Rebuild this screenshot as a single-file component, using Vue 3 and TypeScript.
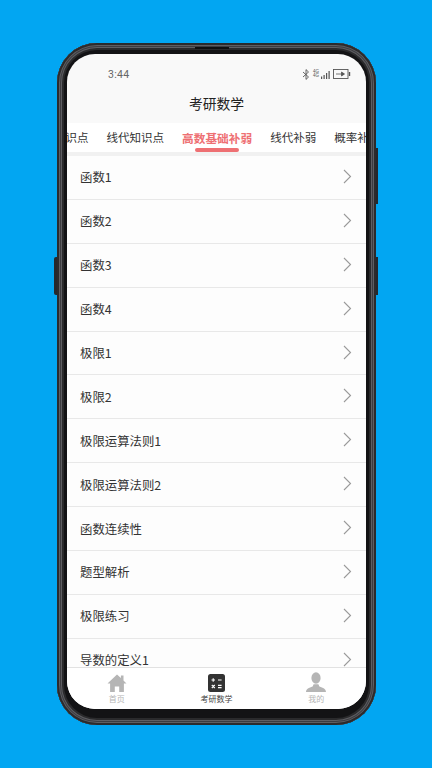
<script setup lang="ts">
const tabs: string[] = ['高数知识点', '线代知识点', '高数基础补弱', '线代补弱', '概率补弱']
const rows: string[] = ['函数1', '函数2', '函数3', '函数4', '极限1', '极限2', '极限运算法则1', '极限运算法则2', '函数连续性', '题型解析', '极限练习', '导数的定义1']
</script>

<template>
  <div class="page">
    <div class="phone">
      <span class="btn btn-left"></span>
      <span class="btn btn-right-a"></span>
      <span class="btn btn-right-b"></span>
      <span class="speaker"></span>
      <div class="screen">
        <div class="status">
          <span class="time">3:44</span>
          <div class="status-icons">
            <svg width="8" height="11" viewBox="0 0 8 11" fill="none" stroke="#555" stroke-width="0.9"><path d="M1 3l5.500 5L4 10.400V.6L6.500 3 1 8" /></svg>
            <span class="net">4G<br />4G</span>
            <svg width="12" height="9" viewBox="0 0 12 9" fill="#555"><rect x="1" y="6.500" width="1.200" height="2.500" /><rect x="3.500" y="5" width="1.200" height="4" /><rect x="6" y="3" width="1.200" height="6" /><rect x="8.500" y="1" width="1.200" height="8" /></svg>
            <svg width="18" height="10" viewBox="0 0 18 10" fill="none"><rect x="0.500" y="0.500" width="14.500" height="9" stroke="#555" stroke-width="0.900" /><rect x="15.800" y="3" width="1.400" height="4" fill="#555" /><path d="M3 5h8M8.500 3l3 2-3 2z" stroke="#555" stroke-width="0.800" fill="#555" /></svg>
          </div>
        </div>
        <div class="title">考研数学</div>
        <div class="tabs">
          <div v-for="(t, i) in tabs" :key="t" class="tab" :class="{ active: i === 2 }">{{ t }}</div>
        </div>
        <div class="list">
          <div v-for="r in rows" :key="r" class="row">
            <span>{{ r }}</span>
            <svg class="chev" width="9" height="15" viewBox="0 0 9 15" fill="none" stroke="#9a9a9a" stroke-width="1.100"><path d="M1 1l6.500 6.500L1 14" /></svg>
          </div>
        </div>
        <div class="nav">
          <div class="nav-item">
            <svg width="20" height="18" viewBox="0 0 20 18" fill="#b5b5b5"><path d="M10 0.500L0.500 9.500h2.600V18h4.700v-5.500h4.400V18h4.700V9.500h2.600L16.500 6.500V1.500h-2.600v2.500z" /></svg>
            <span>首页</span>
          </div>
          <div class="nav-item on">
            <svg width="17" height="18" viewBox="0 0 17 18"><rect width="17" height="18" rx="2.500" fill="#333" /><path d="M3.500 6h3.500M5.200 4.200v3.600M10 6h3.600M3.800 11l3 3M6.800 11l-3 3M10 11.400h3.600M10 13.600h3.600" stroke="#fff" stroke-width="1.100" /></svg>
            <span>考研数学</span>
          </div>
          <div class="nav-item">
            <svg width="20" height="20" viewBox="0 0 20 20" fill="#b5b5b5"><ellipse cx="10" cy="6" rx="4.600" ry="5.800" /><path d="M0 20c0-3.400 3-4.300 6.600-5.600l1-2.200h4.800l1 2.200C17 15.700 20 16.600 20 20z" /></svg>
            <span>我的</span>
          </div>
        </div>
      </div>
    </div>
  </div>
</template>

<style>
html, body { margin: 0; background: #02a6f2; }
</style>

<style scoped>
.page {
  width: 432px;
  height: 768px;
  box-sizing: border-box;
  background: #02a6f2;
  padding: 43px 0 0 57px;
  font-family: "Noto Sans CJK SC", "Liberation Sans", sans-serif;
  overflow: hidden;
}
.phone {
  position: relative;
  width: 319px;
  height: 682px;
  box-sizing: border-box;
  padding: 11px 10px 16px;
  background: #131315;
  border-radius: 40px;
  box-shadow: inset 0 0 0 2px #2b2b2d, inset 0 0 0 3px #5e5e62, inset 0 0 0 4px #3c3c40, inset 0 0 0 5px #5e5e62, inset 0 0 0 7px #2a2a2c;
}
.btn { position: absolute; background: #26282c; }
.btn-left { left: -3px; top: 214px; width: 3px; height: 38px; border-radius: 2px 0 0 2px; }
.btn-right-a { right: -2px; top: 105px; width: 2px; height: 56px; }
.btn-right-b { right: -2px; top: 214px; width: 2px; height: 38px; }
.speaker { position: absolute; left: 138px; top: 4px; width: 34px; height: 2px; background: #0f0f10; }
.screen {
  width: 299px;
  height: 655px;
  border-radius: 28px;
  overflow: hidden;
  background: #f9f9f9;
  display: flex;
  flex-direction: column;
}
.status {
  height: 28px;
  flex: none;
  box-sizing: content-box;
  padding: 6px 15px 0 41px;
  display: flex;
  justify-content: space-between;
  align-items: center;
}
.time { font-size: 10.5px; color: #666; letter-spacing: 0.3px; font-family: "Roboto", sans-serif; }
.status-icons { display: flex; align-items: center; gap: 1px; }
.net { font-size: 4.5px; line-height: 4.5px; color: #555; font-family: "Liberation Sans", sans-serif; margin: 0 0 0 2px; }
.title {
  height: 35px;
  flex: none;
  display: flex;
  align-items: center;
  justify-content: center;
  font-size: 13.8px;
  color: #222;
  padding-bottom: 5px;
  box-sizing: border-box;
}
.tabs {
  flex: none;
  height: 29px;
  background: #fff;
  display: flex;
  gap: 18px;
  overflow: hidden;
  border-bottom: 4px solid #f1f1f1;
  box-sizing: content-box;
}
.tab {
  flex: none;
  position: relative;
  font-size: 11.5px;
  line-height: 29px;
  color: #333;
  white-space: nowrap;
}
.tab:first-child { margin-left: -36px; }
.tab.active { color: #ee7073; font-weight: 700; font-size: 11.7px; }
.tab.active::after {
  content: "";
  position: absolute;
  left: 13px;
  right: 13px;
  bottom: 0;
  height: 4px;
  border-radius: 2px;
  background: #ee7073;
}
.list { flex: 1; min-height: 0; overflow: hidden; background: #fdfdfd; }
.row {
  height: 43.9px;
  box-sizing: border-box;
  display: flex;
  align-items: center;
  justify-content: space-between;
  padding: 0 14px 0 13px;
  border-bottom: 1px solid #e8e8e8;
  font-size: 12.4px;
  color: #333;
}
.chev { margin-bottom: 2px; }
.nav {
  flex: none;
  height: 41px;
  box-sizing: content-box;
  background: #fff;
  border-top: 1px solid #e2e2e2;
  display: grid;
  grid-template-columns: repeat(3, 1fr);
}
.nav-item {
  display: flex;
  flex-direction: column;
  align-items: center;
  justify-content: flex-end;
  padding-bottom: 5px;
  gap: 2px;
  font-size: 8px;
  line-height: 10px;
  color: #b5b5b5;
}
.nav-item.on { color: #444; }
</style>
